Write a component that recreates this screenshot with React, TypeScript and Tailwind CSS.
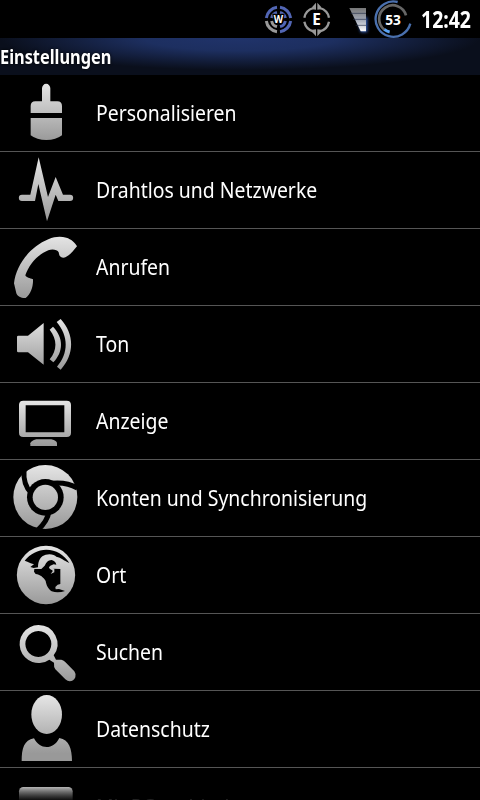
import type { ReactNode } from "react";

type IconProps = { id: string; top: number; from: number; to: number; children: ReactNode };

// Icons are drawn on a grid three times as fine as the row
function Icon({ id, top, from, to, children }: IconProps) {
    return (
        <svg className="h-[76px] w-24 shrink-0" viewBox={`0 ${top} 288 228`}>
            <defs>
                <linearGradient id={id} gradientUnits="userSpaceOnUse" x1="0" y1={from} x2="0" y2={to}>
                    <stop offset="0" stopColor="#e6e6e6" />
                    <stop offset="1" stopColor="#999999" />
                </linearGradient>
            </defs>
            <g fill={`url(#${id})`}>{children}</g>
        </svg>
    );
}

const items = [
    {
        label: "Personalisieren",
        icon: (
            <Icon id="brush" top={-3} from={20} to={195}>
                <path d="M126 37a12 13 0 0 1 25 0V76H172Q186 76 186 90V111H92V90Q92 76 106 76H126Z" />
                <path d="M92 126H186V178Q168 192 139 192T92 178Z" />
            </Icon>
        ),
    },
    {
        label: "Drahtlos und Netzwerke",
        icon: (
            <Icon id="pulse" top={228} from={245} to={435}>
                <path d="M66 356H91L116 244L144 363L167 303L189 356H210a9 9 0 0 1 0 19H175L167 356L141 436L115 324L105 375H66a9 9 0 0 1 0-19Z" />
            </Icon>
        ),
    },
    {
        label: "Anrufen",
        icon: (
            <Icon id="phone" top={-3} from={15} to={205}>
                <path d="M42 160C48 105 90 50 145 28C166 19 182 19 199 23C213 27 226 38 231 49C220 62 207 80 191 83C182 83 177 78 176 67C172 58 155 57 145 61C111 75 87 104 76 136C80 144 89 144 99 148C100 169 92 194 77 204C65 205 52 200 49 190Z" />
            </Icon>
        ),
    },
    {
        label: "Ton",
        icon: (
            <Icon id="speaker" top={228} from={265} to={420}>
                <path d="M55 317H84L131 279V404L84 367H55Q51 367 51 363V321Q51 317 55 317Z" />
                <path d="M149 299L159 290C191 323 191 365 160 397L149 388C172 361 172 328 149 299Z" />
                <path d="M170 276L182 267C224 313 224 374 182 419L171 410C206 370 206 318 170 276Z" />
            </Icon>
        ),
    },
    {
        label: "Anzeige",
        icon: (
            <Icon id="monitor" top={-3} from={48} to={187}>
                <path
                    fillRule="evenodd"
                    d="M70 50H200Q213 50 213 63V146Q213 159 200 159H70Q57 159 57 146V63Q57 50 70 50ZM77 64V145H193V64Z"
                />
                <path d="M109 166H154Q171 170 171 178V186H91V178Q93 170 109 166Z" />
            </Icon>
        ),
    },
    {
        label: "Konten und Synchronisierung",
        icon: (
            <Icon id="sync" top={228} from={240} to={435}>
                <circle cx="136" cy="339" r="96" />
                <circle cx="136" cy="340" r="55" fill="#000" />
                <g fill="none" stroke="#000" strokeWidth="15">
                    <path d="M72 258C70 287 75 308 93 326" />
                    <path d="M154 298C181 295 206 297 232 312" />
                    <path d="M147 382C144 404 132 421 112 440" />
                </g>
                <circle cx="136" cy="340" r="38" />
            </Icon>
        ),
    },
    {
        label: "Ort",
        icon: (
            <Icon id="globe" top={-3} from={22} to={200}>
                <circle cx="138" cy="111" r="87.5" />
                <g fill="#000">
                    <path d="M74 68C91 47 114 35 139 35C168 35 192 50 208 75C190 67 184 59 169 56C164 50 151 46 137 50C122 54 114 68 114 88L101 90L91 87L102 79L92 76L82 71Z" />
                    <path d="M103 93H124L134 83L138 76Q145 66 155 66Q167 69 169 80L161 79L151 83Q147 85 147 90L154 96L161 92L181 93V138L173 140L166 147L167 154L177 153L195 159Q174 166 155 160C143 152 139 140 137 129C132 119 119 109 107 108L102 101Z" />
                </g>
                <path d="M155 92H163V103L152 108L158 100Z" />
            </Icon>
        ),
    },
    {
        label: "Suchen",
        icon: (
            <Icon id="search" top={228} from={260} to={430}>
                <path
                    fillRule="evenodd"
                    d="M115 261a57 57 0 0 1 46 91L168 365H184Q190 366 195 371L223 400Q229 408 226 418Q221 430 209 430Q203 430 196 424L166 394Q161 388 162 374L148 365A57 57 0 1 1 115 261ZM115 279a39 39 0 1 0 .1 0Z"
                />
            </Icon>
        ),
    },
    {
        label: "Datenschutz",
        icon: (
            <Icon id="person" top={3} from={15} to={190}>
                <ellipse cx="140" cy="73.5" rx="46" ry="58.5" />
                <path d="M65 213C65 175 72 151 102 145C119 180 161 180 178 144C207 149 216 176 216 213Z" />
            </Icon>
        ),
    },
];

function StatusIcons() {
    return (
        <svg className="h-[38px] w-[165px]" viewBox="0 0 495 114" fontFamily="'Noto Sans', sans-serif" fontWeight="700">
            <defs>
                <linearGradient id="signal" x1="0" y1="0" x2="0" y2="1">
                    <stop offset="0" stopColor="#777" />
                    <stop offset="0.5" stopColor="#a0a7b6" />
                    <stop offset="1" stopColor="#fff" />
                </linearGradient>
                <filter id="glow" x="-50%" y="-50%" width="200%" height="200%">
                    <feGaussianBlur stdDeviation="5" />
                </filter>
            </defs>
            {/* Wifi */}
            <g fill="none" strokeWidth="9">
                <g stroke="#5266b4">
                    <path d="M81 22A37 37 0 0 0 49 54M65 54A22 22 0 0 1 81 37" />
                    <path d="M90 22A37 37 0 0 1 122 54M90 37A22 22 0 0 1 106 54" />
                    <path d="M122 63A37 37 0 0 1 90 95M106 63A22 22 0 0 1 90 80" />
                </g>
                <path stroke="#999" d="M49 63A37 37 0 0 0 81 95M65 63A22 22 0 0 0 81 80" />
            </g>
            <text x="85.5" y="69" fontSize="29" textAnchor="middle" fill="#fff" stroke="#000" strokeWidth="7" paintOrder="stroke">
                W
            </text>
            {/* Edge */}
            <g fill="none" stroke="#999" strokeWidth="7">
                <path d="M190 24A38 38 0 0 0 163 53M163 65A38 38 0 0 0 190 94" />
                <path d="M210 24A38 38 0 0 1 237 53M237 65A38 38 0 0 1 210 94" />
            </g>
            <path fill="#999" d="M198 8V29L187 28V20ZM202 8V29L213 28V20ZM198 109V88L187 89V97ZM202 109V88L213 89V97Z" />
            <text x="200" y="75" fontSize="46" textAnchor="middle" fill="#fff">
                E
            </text>
            {/* Signal */}
            <path fill="#3560b8" filter="url(#glow)" d="M322 52H352V97H332Z" />
            <path fill="url(#signal)" d="M298 24H348V94H332Z" />
            <path stroke="#26304a" strokeWidth="2" d="M302 40H348M309 58H348M317 76H348" />
            {/* Battery */}
            <g fill="none">
                <path stroke="#4a70ae" strokeWidth="7" d="M443 6A53 53 0 1 0 481 71" />
                <path stroke="#666" strokeWidth="8" d="M468 46A41 41 0 1 0 403 89" />
                <path stroke="#5aa2f4" strokeWidth="9" d="M403 88Q410 94 419 96" />
            </g>
            <text x="429" y="75" fontSize="41" textAnchor="middle" fill="#fff">
                53
            </text>
        </svg>
    );
}

const labelClass = "origin-left scale-x-[0.863] text-[22.5px] whitespace-nowrap";

export default function App() {
    return (
        <div className="relative flex h-[800px] w-[480px] flex-col overflow-hidden bg-black font-['Noto_Sans',sans-serif] text-white">
            {/* Status bar */}
            <div className="flex h-[38px] shrink-0 items-center justify-end">
                <StatusIcons />
                <div className="w-[65px] pt-px pl-1.5">
                    <span className="inline-block origin-left scale-x-[0.865] text-[22.5px] font-bold">12:42</span>
                </div>
            </div>

            {/* Title */}
            <div className="flex h-[37px] shrink-0 items-center bg-[#0a0f1c] bg-[radial-gradient(ellipse_240px_32px_at_50%_0,#20336a_0%,#1d2f60_40%,#0a0f1c_100%)] pt-0.5">
                <h1 className="origin-left scale-x-[0.86] text-[19px] leading-none font-bold [text-shadow:0_0_3px_#000]">
                    Einstellungen
                </h1>
            </div>

            <ul className="shrink-0">
                {items.map((item) => (
                    <li key={item.label} className="flex h-[77px] items-center border-b border-[#555]">
                        {item.icon}
                        <span className={labelClass}>{item.label}</span>
                    </li>
                ))}
                <li className="flex h-[77px] items-center">
                    <Icon id="computer" top={234} from={280} to={330}>
                        <rect x="57" y="288" width="161" height="110" rx="13" />
                    </Icon>
                    <span className={labelClass}>Mit PC verbinden</span>
                </li>
            </ul>

            {/* Fade over the cut-off row */}
            <div className="absolute inset-x-0 bottom-0 h-4 bg-linear-to-b from-transparent to-black/90" />
        </div>
    );
}
